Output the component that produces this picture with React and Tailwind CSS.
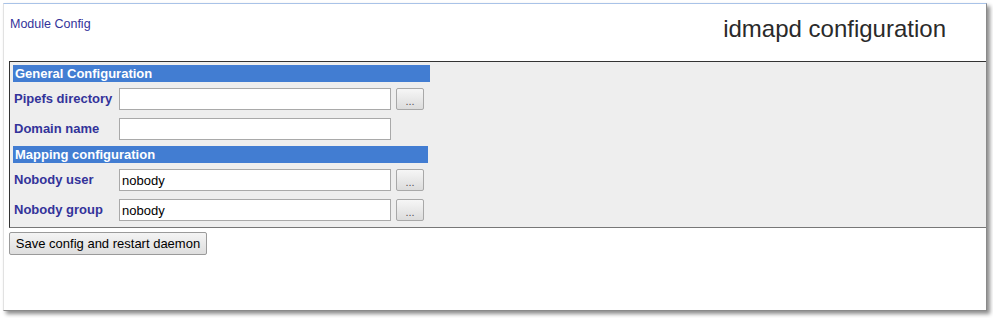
import React from 'react'

const font = { fontFamily: '"Liberation Sans", Arial, sans-serif' }

function Dots() {
  return (
    <button className="w-[28px] h-[22px] ml-[5px] border border-[#a8a8a8] rounded-[2px] bg-gradient-to-b from-[#f6f6f6] to-[#dcdcdc] text-[11px] leading-none text-[#555] pt-[4px]">
      ...
    </button>
  )
}

function Row({ label, value, browse, className = '' }) {
  return (
    <div className={`flex items-center h-[22px] ${className}`}>
      <div className="w-[106px] pl-[1px] text-[13px] font-bold text-[#33339a] whitespace-nowrap">{label}</div>
      <input
        readOnly
        value={value}
        className="w-[272px] h-[22px] border border-[#a9a9a9] bg-white px-[2px] text-[13px] text-black outline-none"
        style={font}
      />
      {browse && <Dots />}
    </div>
  )
}

function Bar({ children, w }) {
  return (
    <div className={`${w} h-[17px] bg-[#427dd2] text-white text-[13px] font-bold leading-[17px] pl-[2px]`}>
      {children}
    </div>
  )
}

export default function App() {
  return (
    <div className="w-[993px] h-[318px] bg-white overflow-hidden" style={font}>
      <div className="ml-[3px] mt-[3px] w-[984px] h-[308px] bg-white border-t border-t-[#a9c3e8] border-l border-l-[#e2e2e2] border-r border-r-[#8a8a8a] border-b border-b-[#8a8a8a] shadow-[3px_3px_4px_rgba(0,0,0,0.45)]">
        <div className="flex justify-between h-[57px]">
          <div className="pl-[6px] pt-[11px] text-[12.5px] text-[#33339a]">Module Config</div>
          <div className="pr-[40px] pt-[7px] text-[24px] text-[#2a2a2a]">idmapd configuration</div>
        </div>
        <div className="ml-[5px] border-t border-t-[#333] border-l border-l-[#333] border-b border-b-[#777] bg-[#eeeeee] pt-[3px] pl-[3px] pb-[6px]">
          <Bar w="w-[417px]">General Configuration</Bar>
          <Row label="Pipefs directory" value="" browse className="mt-[6px]" />
          <Row label="Domain name" value="" className="mt-[8px]" />
          <div className="mt-[6px]">
            <Bar w="w-[415px]">Mapping configuration</Bar>
          </div>
          <Row label="Nobody user" value="nobody" browse className="mt-[6px]" />
          <Row label="Nobody group" value="nobody" browse className="mt-[8px]" />
        </div>
        <button className="ml-[5px] mt-[4px] w-[198px] h-[23px] border border-[#9a9a9a] rounded-[2px] bg-gradient-to-b from-[#f4f4f4] to-[#dedede] text-[13px] text-black">
          Save config and restart daemon
        </button>
      </div>
    </div>
  )
}
